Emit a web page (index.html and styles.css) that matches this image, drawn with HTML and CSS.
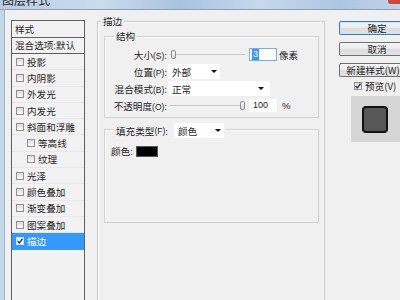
FILE: index.html
```html
<!DOCTYPE html>
<html lang="zh-CN">
<head>
    <meta charset="UTF-8">
    <title>图层样式</title>
    <link rel="stylesheet" href="styles.css">
</head>
<body>
    <div class="titlebar">
        <span class="title">图层样式</span>
        <span class="close"></span>
    </div>
    <div class="frame">
        <div class="styles-list">
            <div class="list-head">样式</div>
            <div class="list-blend">混合选项:默认</div>
            <div class="list-item"><span class="check"></span>投影</div>
            <div class="list-item"><span class="check"></span>内阴影</div>
            <div class="list-item"><span class="check"></span>外发光</div>
            <div class="list-item"><span class="check"></span>内发光</div>
            <div class="list-item"><span class="check"></span>斜面和浮雕</div>
            <div class="list-item sub"><span class="check"></span>等高线</div>
            <div class="list-item sub"><span class="check"></span>纹理</div>
            <div class="list-item"><span class="check"></span>光泽</div>
            <div class="list-item"><span class="check"></span>颜色叠加</div>
            <div class="list-item"><span class="check"></span>渐变叠加</div>
            <div class="list-item"><span class="check"></span>图案叠加</div>
            <div class="list-item selected">
                <span class="check checked"><svg width="6" height="6" viewBox="0 0 6 6"><path d="M0.6 3 L2.3 5 L5.5 0.7" stroke="#1d3f73" stroke-width="1.4" fill="none"/></svg></span>描边
            </div>
        </div>

        <div class="panel">
            <div class="group-title outer-title">描边</div>

            <div class="group structure">
                <div class="group-title">结构</div>
                <div class="rows">
                    <div class="row">
                        <span class="label">大小<span class="k">(S)</span>:</span>
                        <div class="slider"><span class="thumb"></span></div>
                        <div class="num focused"><span class="sel">3</span></div>
                        <span class="unit">像素</span>
                    </div>
                    <div class="row">
                        <span class="label">位置<span class="k">(P)</span>:</span>
                        <div class="select short">外部<span class="arrow"></span></div>
                    </div>
                    <div class="row">
                        <span class="label">混合模式<span class="k">(B)</span>:</span>
                        <div class="select long">正常<span class="arrow"></span></div>
                    </div>
                    <div class="row">
                        <span class="label">不透明度<span class="k">(O)</span>:</span>
                        <div class="slider end"><span class="thumb"></span></div>
                        <div class="num">100</div>
                        <span class="unit pct">%</span>
                    </div>
                </div>
            </div>

            <div class="group fill">
                <div class="group-title fill-title">
                    填充类型<span class="k">(F)</span>:
                    <div class="select fill-select">颜色<span class="arrow"></span></div>
                </div>
                <div class="color-row">
                    颜色:<span class="swatch"></span>
                </div>
            </div>
        </div>

        <div class="side">
            <div class="btn default">确定</div>
            <div class="btn">取消</div>
            <div class="btn">新建样式(W)...</div>
            <div class="preview-check">
                <span class="check"><svg width="6" height="6" viewBox="0 0 6 6"><path d="M0.6 3 L2.3 5 L5.5 0.7" stroke="#1d3f73" stroke-width="1.4" fill="none"/></svg></span>预览(V)
            </div>
            <div class="preview">
                <div class="preview-swatch"></div>
            </div>
        </div>
    </div>
</body>
</html>
```

FILE: styles.css
```css
* {
    box-sizing: border-box;
}
body {
    margin: 0;
    width: 400px;
    height: 300px;
    overflow: hidden;
    background: #f0f0f0;
    font-family: "Noto Sans CJK SC", "DejaVu Sans", sans-serif;
    font-size: 9.6px;
    color: #1e1e1e;
}
.titlebar {
    height: 10px;
    display: flex;
    justify-content: space-between;
    overflow: hidden;
    background: linear-gradient(90deg, #b9cde3, #cadcee 25%, #a9c3df 45%, #c6d9ec 65%, #adc6e0 85%, #c1d4e9);
    border-bottom: 1px solid #8d9fb3;
}
.title {
    font-size: 12px;
    line-height: 12px;
    margin: -6px 0 0 2px;
    color: #2a2a2a;
}
.close {
    width: 14px;
    height: 4px;
    background: #c9493a;
    border-radius: 0 0 3px 3px;
    margin-right: -2px;
}
.frame {
    display: flex;
    align-items: flex-start;
    height: 290px;
    overflow: hidden;
    border-left: 4px solid #c4d6ea;
    box-shadow: inset 1px 0 0 #a3b3c4;
    padding: 10px 0 0 7px;
}

/* left list */
.styles-list {
    flex: none;
    width: 74px;
    height: 280px;
    border: 1px solid #5f5f5f;
    border-bottom: none;
    background: #f2f2f2;
}
.list-head {
    height: 17px;
    line-height: 16px;
    padding-left: 3px;
    border-bottom: 1px solid #5f5f5f;
}
.list-blend {
    height: 16px;
    line-height: 15px;
    padding-left: 3px;
    border-bottom: 1px solid #5f5f5f;
}
.list-item {
    height: 16.3px;
    display: flex;
    align-items: center;
    gap: 3px;
    padding-left: 4px;
    border-bottom: 1px solid #e8e8e8;
}
.list-item.sub {
    padding-left: 15px;
}
.list-item.selected {
    background: #3399ff;
    color: #fff;
    border-bottom-color: #3399ff;
}
.check {
    flex: none;
    width: 8px;
    height: 8px;
    border: 1px solid #8e8f8f;
    background: linear-gradient(#dcdcdc, #fbfbfb);
    display: flex;
    align-items: center;
    justify-content: center;
}
.check.checked {
    background: #fff;
    border-color: #d0e4f7;
}

/* main panel */
.panel {
    flex: none;
    width: 228px;
    height: 279px;
    margin: 1px 0 0 12px;
    border: 1px solid #cbcbcb;
    border-bottom: none;
    box-shadow: inset 1px 1px 0 #fff;
    padding: 0 5px 0 6px;
}
.group {
    border: 1px solid #d0d0d0;
    box-shadow: inset 1px 1px 0 #fff;
}
.group-title {
    display: flex;
    align-items: center;
    width: fit-content;
    height: 14px;
    margin: -8px 0 0 9px;
    padding: 0 2px;
    background: #f0f0f0;
}
.outer-title {
    margin-left: -3px;
}
.structure {
    margin-top: 8px;
    padding-bottom: 3px;
}
.rows {
    padding-top: 3px;
}
.row {
    display: flex;
    align-items: center;
    height: 17px;
}
.label {
    flex: none;
    width: 62px;
    text-align: right;
}
.k {
    font-family: "Liberation Sans", sans-serif;
    font-size: 8.5px;
}
.slider {
    width: 75px;
    height: 9px;
    margin-left: 3px;
    display: flex;
    justify-content: flex-start;
    background: linear-gradient(#c6c6c6, #c6c6c6) center / 100% 1px no-repeat;
}
.slider.end {
    justify-content: flex-end;
}
.thumb {
    width: 5px;
    height: 9px;
    margin-left: 1px;
    border: 1px solid #8c8c8c;
    border-radius: 2px;
    background: linear-gradient(#fdfdfd, #dadada);
}
.num {
    width: 28px;
    height: 13px;
    margin-left: 4px;
    padding-left: 3px;
    background: #fff;
    border: 1px solid #fff;
    font-family: "Liberation Sans", sans-serif;
    font-size: 9px;
    line-height: 11px;
}
.num.focused {
    border-color: #7aaee0;
    padding-left: 2px;
}
.sel {
    display: inline-block;
    height: 11px;
    padding: 0 1px;
    background: #3399ff;
    color: #fff;
}
.unit {
    margin-left: 2px;
}
.unit.pct {
    margin-left: 5px;
    font-family: "Liberation Sans", sans-serif;
}
.select {
    height: 15px;
    margin-left: 1px;
    padding: 0 3px 0 4px;
    display: flex;
    align-items: center;
    justify-content: space-between;
    background: #fff;
}
.select.short {
    width: 52px;
}
.select.long {
    width: 102px;
    padding-right: 6px;
}
.arrow {
    width: 0;
    height: 0;
    border-left: 3px solid transparent;
    border-right: 3px solid transparent;
    border-top: 3px solid #111;
}

/* fill group */
.fill {
    height: 94px;
    margin-top: 11px;
}
.fill-title {
    height: 15px;
    margin-top: -7px;
}
.fill-select {
    width: 50px;
    margin-left: 6px;
}
.color-row {
    display: flex;
    align-items: center;
    height: 12px;
    margin-top: 7px;
    padding-left: 6px;
}
.swatch {
    width: 22px;
    height: 11px;
    margin-left: 3px;
    background: #000;
    border: 1px solid #555;
}

/* right side */
.side {
    flex: none;
    width: 76px;
    margin: 1px 0 0 14px;
    display: flex;
    flex-direction: column;
}
.btn {
    height: 14px;
    margin-bottom: 7px;
    border: 1px solid #707070;
    border-radius: 2px;
    background: linear-gradient(#f6f6f6, #ebebeb 50%, #dddddd 51%, #e3e3e3);
    text-align: center;
    line-height: 12px;
}
.btn.default {
    border-color: #3c7fb1;
    box-shadow: inset 0 0 0 1px #c4e4f9;
}
.preview-check {
    display: flex;
    align-items: center;
    gap: 3px;
    height: 12px;
    margin-top: -4px;
    padding-left: 15px;
}
.preview {
    width: 50px;
    height: 46px;
    margin: 4px 0 0 12px;
    padding: 10px 0 0 11px;
    background: #d5d5d5;
}
.preview-swatch {
    width: 26px;
    height: 27px;
    border: 2px solid #111;
    border-radius: 4px;
    background: #575757;
}
```
